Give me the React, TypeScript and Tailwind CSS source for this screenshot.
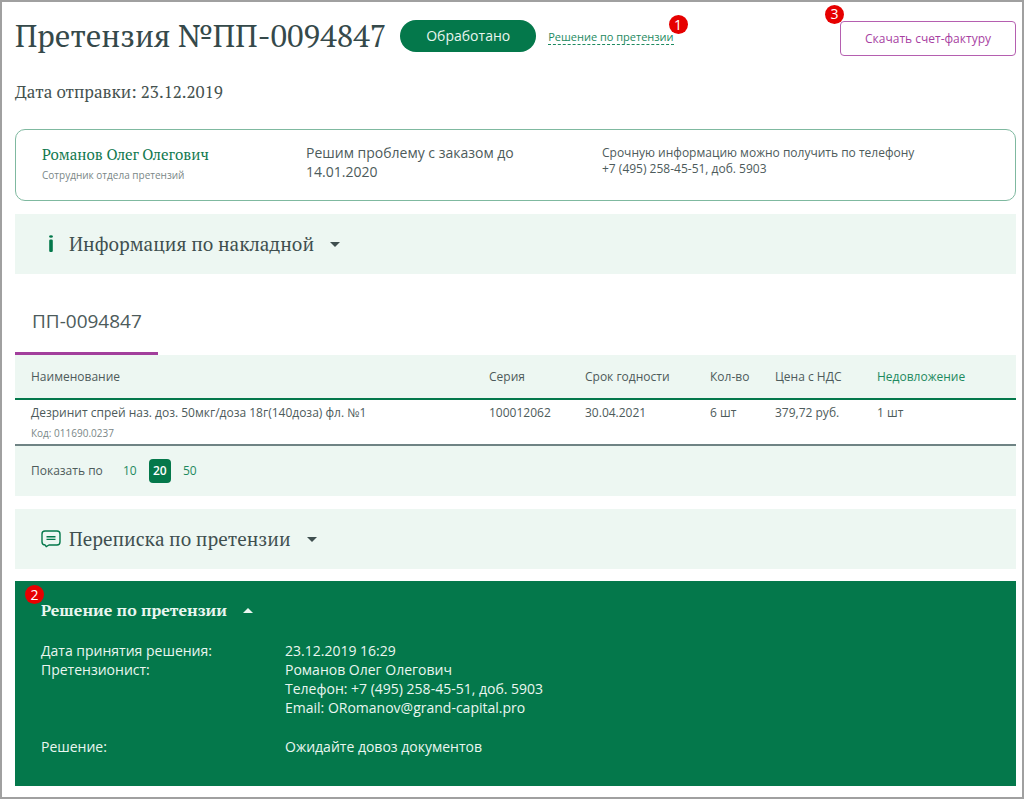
import { useState, type ReactNode } from "react";

const SERIF = "font-['PT_Serif','Liberation_Serif',serif]";

function Marker({ n, className }: { n: number; className: string }) {
  return (
    <span
      className={`absolute flex size-[19px] items-center justify-center rounded-full bg-[#e60000] font-['Open_Sans',sans-serif] text-[14px] leading-none font-medium text-white ${className}`}
    >
      {n}
    </span>
  );
}

function Caret({ up = false }: { up?: boolean }) {
  return (
    <svg width="10" height="5" viewBox="0 0 10 5" fill="currentColor" aria-hidden="true">
      <path d={up ? "M0 5 5 0l5 5z" : "M0 0h10L5 5z"} />
    </svg>
  );
}

function InfoIcon() {
  return (
    <svg width="20" height="20" viewBox="0 0 20 20" fill="#04784b" aria-hidden="true">
      <ellipse cx="10" cy="2.5" rx="1.9" ry="1.3" />
      <rect x="8.2" y="5.5" width="3.6" height="12.5" rx="1.2" />
    </svg>
  );
}

function ChatIcon() {
  return (
    <svg width="20" height="20" viewBox="0 0 20 20" fill="none" stroke="#04784b" strokeLinejoin="round" aria-hidden="true">
      <path
        d="M4 2h12q3 0 3 3v8q0 3-3 3H8L5.2 17.7 4.2 16Q1 16 1 13V5q0-3 3-3z"
        strokeWidth="1.4"
      />
      <path d="M5.5 7.7h9M5.5 10.4h9" strokeWidth="1.4" />
    </svg>
  );
}

function Section({ icon, title }: { icon: ReactNode; title: string }) {
  return (
    <section className="bg-[#edf7f2]">
      <button type="button" className="flex h-[60px] w-full items-center px-[26px] text-left text-[#3f4f4f]">
        {icon}
        <span className={`${SERIF} mr-4 ml-2 text-[19px] leading-[28px]`}>{title}</span>
        <Caret />
      </button>
    </section>
  );
}

function PageSize() {
  const [size, setSize] = useState(20);
  return (
    <div className="flex h-[50px] items-center bg-[#edf7f2] px-4">
      <span className="mr-4">Показать по</span>
      <div className="flex gap-2">
        {[10, 20, 50].map((n) => (
          <button
            key={n}
            type="button"
            onClick={() => setSize(n)}
            className={
              n === size
                ? "h-6 w-[22px] rounded bg-[#04784b] font-semibold text-white"
                : "h-6 w-[22px] text-[#1d8a5f]"
            }
          >
            {n}
          </button>
        ))}
      </div>
    </div>
  );
}

export default function App() {
  return (
    <main className="min-h-screen border-2 border-[#a0a0a0] bg-white pr-[6px] pb-[11px] pl-[13px] font-['Open_Sans',sans-serif] text-[12px] leading-[16px] text-[#4d5b5b]">
      <header className="flex items-center pt-3">
        <h1 className={`${SERIF} text-[31px] leading-[44px] text-[#35494a]`}>Претензия №ПП-0094847</h1>
        <span className="ml-[14px] rounded-full bg-[#04784b] px-[26px] py-[6px] text-[14px] leading-[20px] font-medium text-[#e8f5ee]">
          Обработано
        </span>
        <div className="relative ml-3 pt-[2px]">
          <a href="#decision" className="border-b border-dashed border-[#1d8a5f] text-[11px] leading-[14px] text-[#1d8a5f]">
            Решение по претензии
          </a>
          <Marker n={1} className="-top-3 -right-[14px]" />
        </div>
        <div className="relative ml-auto pt-1">
          <button type="button" className="rounded border border-[#b55fb0] px-6 py-2 text-[12px] leading-[17px] text-[#a83fa2]">
            Скачать счет-фактуру
          </button>
          <Marker n={3} className="-top-3 -left-[15px]" />
        </div>
      </header>

      <p className={`${SERIF} mt-[22px] text-[17px] leading-[24px] text-[#45524f]`}>Дата отправки: 23.12.2019</p>

      <div className="mt-[25px] grid grid-cols-[264px_296px_1fr] rounded-[10px] border border-[#7fb9a0] px-[26px] pt-[13px] pb-[18px]">
        <div>
          <div className={`${SERIF} text-[15px] leading-[22px] text-[#12794f]`}>Романов Олег Олегович</div>
          <div className="mt-[3px] text-[10px] leading-[14px] text-[#7a8787]">Сотрудник отдела претензий</div>
        </div>
        <div className="w-[220px] text-[14px] leading-[19px]">Решим проблему с заказом до 14.01.2020</div>
        <div className="pt-[2px]">
          Срочную информацию можно получить по телефону
          <br />
          +7 (495) 258-45-51, доб. 5903
        </div>
      </div>

      <div className="mt-[13px]">
        <Section icon={<InfoIcon />} title="Информация по накладной" />
      </div>

      <div className="mt-[18px] flex" role="tablist">
        <button
          type="button"
          role="tab"
          aria-selected="true"
          className="border-b-[3px] border-[#a23f9c] pt-[17px] pr-4 pb-[19px] pl-[17px] text-[19px] leading-[24px]"
        >
          ПП-0094847
        </button>
      </div>

      <table className="w-full table-fixed border-collapse text-left">
        <colgroup>
          <col />
          <col className="w-[96px]" />
          <col className="w-[125px]" />
          <col className="w-[65px]" />
          <col className="w-[102px]" />
          <col className="w-[139px]" />
        </colgroup>
        <thead>
          <tr className="h-11 border-b-2 border-[#04784b] bg-[#edf7f2]">
            <th className="pl-4 font-normal">Наименование</th>
            <th className="font-normal">Серия</th>
            <th className="font-normal">Срок годности</th>
            <th className="font-normal">Кол-во</th>
            <th className="font-normal">Цена с НДС</th>
            <th className="font-normal text-[#1d8a5f]">Недовложение</th>
          </tr>
        </thead>
        <tbody>
          <tr className="border-b-2 border-[#6f8384] align-top">
            <td className="pt-[5px] pb-[3px] pl-4">
              Дезринит спрей наз. доз. 50мкг/доза 18г(140доза) фл. №1
              <div className="mt-1 text-[10px] text-[#7a8787]">Код: 011690.0237</div>
            </td>
            <td className="pt-[5px]">100012062</td>
            <td className="pt-[5px]">30.04.2021</td>
            <td className="pt-[5px]">6 шт</td>
            <td className="pt-[5px]">379,72 руб.</td>
            <td className="pt-[5px]">1 шт</td>
          </tr>
        </tbody>
      </table>
      <PageSize />

      <div className="mt-[13px]">
        <Section icon={<ChatIcon />} title="Переписка по претензии" />
      </div>

      <section id="decision" className="relative mt-3 bg-[#04784b] px-[26px] pt-4 pb-[30px] text-[14px] leading-[19px] text-[#eaf6f0]">
        <Marker n={2} className="top-1 left-[10px]" />
        <button type="button" className="flex items-center gap-4">
          <span className={`${SERIF} text-[16px] leading-[26px] font-bold`}>Решение по претензии</span>
          <Caret up />
        </button>
        <dl className="mt-[18px] grid grid-cols-[244px_1fr] font-medium">
          <dt>Дата принятия решения:</dt>
          <dd>23.12.2019 16:29</dd>
          <dt>Претензионист:</dt>
          <dd>
            Романов Олег Олегович
            <br />
            Телефон: +7 (495) 258-45-51, доб. 5903
            <br />
            Email: ORomanov@grand-capital.pro
          </dd>
          <dt className="mt-5">Решение:</dt>
          <dd className="mt-5">Ожидайте довоз документов</dd>
        </dl>
      </section>
    </main>
  );
}
